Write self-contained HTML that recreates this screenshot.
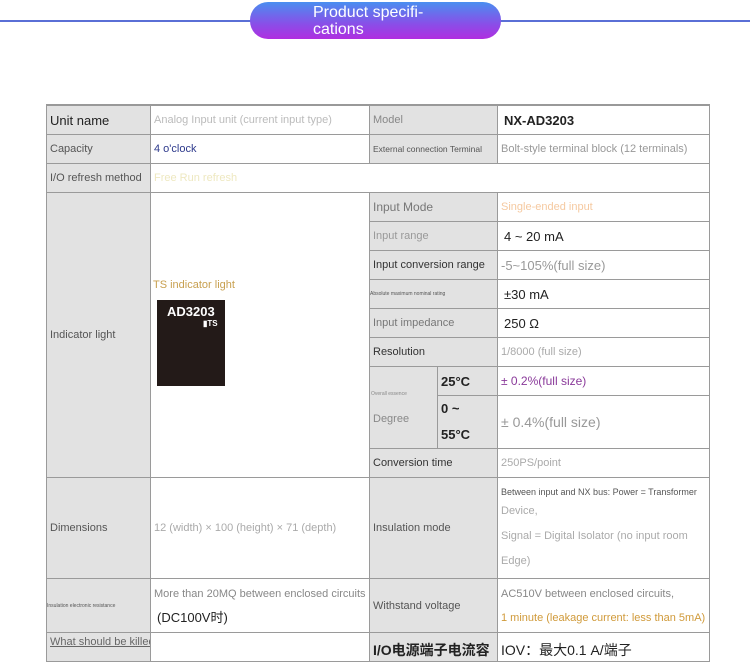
<!DOCTYPE html>
<html><head><meta charset="utf-8"><style>
body{margin:0;width:750px;height:648px;overflow:hidden;background:#fff;position:relative;font-family:"Liberation Sans","Noto Sans CJK SC",sans-serif}
.c{position:absolute;box-sizing:border-box;border:1px solid #9a9a9a;font-size:11px;color:#555;display:flex;align-items:center;padding-left:3px;overflow:hidden;white-space:nowrap}
.g{background:#e2e2e2}
.line{position:absolute;left:0;top:20px;width:750px;height:2px;background:#5a6fd6}
.pill{position:absolute;left:250px;top:2px;width:251px;height:37px;border-radius:18px;background:linear-gradient(#4a8ef0,#8a4ee8 60%,#b02ee0);color:#fff;font-size:16px;line-height:17px;box-sizing:border-box;padding:2px 0 0 63px}
</style></head><body>
<div class="line"></div>
<div class="pill">Product specifi-<br>cations</div>

<div class="c g" style="left:46px;top:104px;width:105px;height:31px;font-size:13px;color:#222;border-top:2px solid #999">Unit name</div>
<div class="c" style="left:150px;top:104px;width:220px;height:31px;color:#bbb;border-top:2px solid #999">Analog Input unit (current input type)</div>
<div class="c g" style="left:369px;top:104px;width:129px;height:31px;color:#888;border-top:2px solid #999">Model</div>
<div class="c" style="left:497px;top:104px;width:213px;height:31px;font-size:13px;font-weight:bold;color:#222;padding-left:6px;border-top:2px solid #999">NX-AD3203</div>

<div class="c g" style="left:46px;top:134px;width:105px;height:30px">Capacity</div>
<div class="c" style="left:150px;top:134px;width:220px;height:30px;color:#2e3a8c">4 o'clock</div>
<div class="c g" style="left:369px;top:134px;width:129px;height:30px;font-size:8.5px">External connection Terminal</div>
<div class="c" style="left:497px;top:134px;width:213px;height:30px;color:#999">Bolt-style terminal block (12 terminals)</div>

<div class="c g" style="left:46px;top:163px;width:105px;height:30px">I/O refresh method</div>
<div class="c" style="left:150px;top:163px;width:560px;height:30px;color:#eee8c0">Free Run refresh</div>

<div class="c g" style="left:46px;top:192px;width:105px;height:286px">Indicator light</div>
<div class="c" style="left:150px;top:192px;width:220px;height:286px"></div>
<div style="position:absolute;left:153px;top:279px;font-size:11px;color:#c8a050">TS indicator light</div>
<div style="position:absolute;left:157px;top:300px;width:68px;height:86px;background:#231a18;color:#fff;font-weight:bold">
<div style="position:absolute;left:10px;top:4px;font-size:13px">AD3203</div>
<div style="position:absolute;left:46px;top:19px;font-size:8px">▮TS</div></div>

<div class="c g" style="left:369px;top:192px;width:129px;height:30px;font-size:12px;color:#777">Input Mode</div>
<div class="c" style="left:497px;top:192px;width:213px;height:30px;color:#f5c9a0">Single-ended input</div>
<div class="c g" style="left:369px;top:221px;width:129px;height:30px;color:#999">Input range</div>
<div class="c" style="left:497px;top:221px;width:213px;height:30px;font-size:13px;color:#222;padding-left:6px">4 ~ 20 mA</div>
<div class="c g" style="left:369px;top:250px;width:129px;height:30px;color:#333">Input conversion range</div>
<div class="c" style="left:497px;top:250px;width:213px;height:30px;font-size:13px;color:#999">-5~105%(full size)</div>
<div class="c g" style="left:369px;top:279px;width:129px;height:30px;font-size:5px;padding-left:0">Absolute maximum nominal rating</div>
<div class="c" style="left:497px;top:279px;width:213px;height:30px;font-size:13px;color:#222;padding-left:6px">±30 mA</div>
<div class="c g" style="left:369px;top:308px;width:129px;height:30px;color:#777">Input impedance</div>
<div class="c" style="left:497px;top:308px;width:213px;height:30px;font-size:13px;color:#222;padding-left:6px">250 Ω</div>
<div class="c g" style="left:369px;top:337px;width:129px;height:30px;color:#333">Resolution</div>
<div class="c" style="left:497px;top:337px;width:213px;height:30px;color:#aaa">1/8000 (full size)</div>
<div class="c g" style="left:369px;top:366px;width:69px;height:83px;color:#888;flex-direction:column;align-items:flex-start;justify-content:center;padding-left:1px"><span style="font-size:5px">Overall essence</span><span style="margin-top:16px;font-size:11px;padding-left:2px">Degree</span></div>
<div class="c g" style="left:437px;top:366px;width:61px;height:30px;font-size:13px;font-weight:bold;color:#222">25°C</div>
<div class="c" style="left:497px;top:366px;width:213px;height:30px;font-size:12px;color:#8a3a9a">± 0.2%(full size)</div>
<div class="c g" style="left:437px;top:395px;width:61px;height:54px;font-size:13px;font-weight:bold;color:#222;line-height:26px;white-space:normal">0 ~<br>55°C</div>
<div class="c" style="left:497px;top:395px;width:213px;height:54px;font-size:14px;color:#999">± 0.4%(full size)</div>
<div class="c g" style="left:369px;top:448px;width:129px;height:30px;color:#333">Conversion time</div>
<div class="c" style="left:497px;top:448px;width:213px;height:30px;color:#aaa">250PS/point</div>

<div class="c g" style="left:46px;top:477px;width:105px;height:102px">Dimensions</div>
<div class="c" style="left:150px;top:477px;width:220px;height:102px;color:#aaa">12 (width) × 100 (height) × 71 (depth)</div>
<div class="c g" style="left:369px;top:477px;width:129px;height:102px">Insulation mode</div>
<div class="c" style="left:497px;top:477px;width:213px;height:102px;flex-direction:column;align-items:flex-start;justify-content:flex-start;padding-top:7px;line-height:25px;color:#aaa"><span style="font-size:9px;color:#555;line-height:14px">Between input and NX bus: Power = Transformer</span><span>Device,</span><span>Signal = Digital Isolator (no input room</span><span>Edge)</span></div>

<div class="c g" style="left:46px;top:578px;width:105px;height:55px;font-size:5px;padding-left:0">Insulation electronic resistance</div>
<div class="c" style="left:150px;top:578px;width:220px;height:55px;flex-direction:column;align-items:flex-start;justify-content:center;color:#888;line-height:24px"><span>More than 20MQ between enclosed circuits</span><span style="font-size:13px;color:#222;padding-left:3px">(DC100V时)</span></div>
<div class="c g" style="left:369px;top:578px;width:129px;height:55px">Withstand voltage</div>
<div class="c" style="left:497px;top:578px;width:213px;height:55px;flex-direction:column;align-items:flex-start;justify-content:center;line-height:24px;color:#888"><span>AC510V between enclosed circuits,</span><span style="color:#d09a3a">1 minute (leakage current: less than 5mA)</span></div>

<div class="c g" style="left:46px;top:632px;width:105px;height:30px;align-items:flex-start;padding-top:3px;color:#666;text-decoration:underline">What should be killed</div>
<div class="c" style="left:150px;top:632px;width:220px;height:30px"></div>
<div class="c g" style="left:369px;top:632px;width:129px;height:30px;align-items:flex-start;padding-top:7px;font-size:14px;font-weight:bold;color:#222">I/O电源端子电流容</div>
<div class="c" style="left:497px;top:632px;width:213px;height:30px;align-items:flex-start;padding-top:7px;font-size:14px;color:#222">IOV：最大0.1 A/端子</div>
</body></html>
